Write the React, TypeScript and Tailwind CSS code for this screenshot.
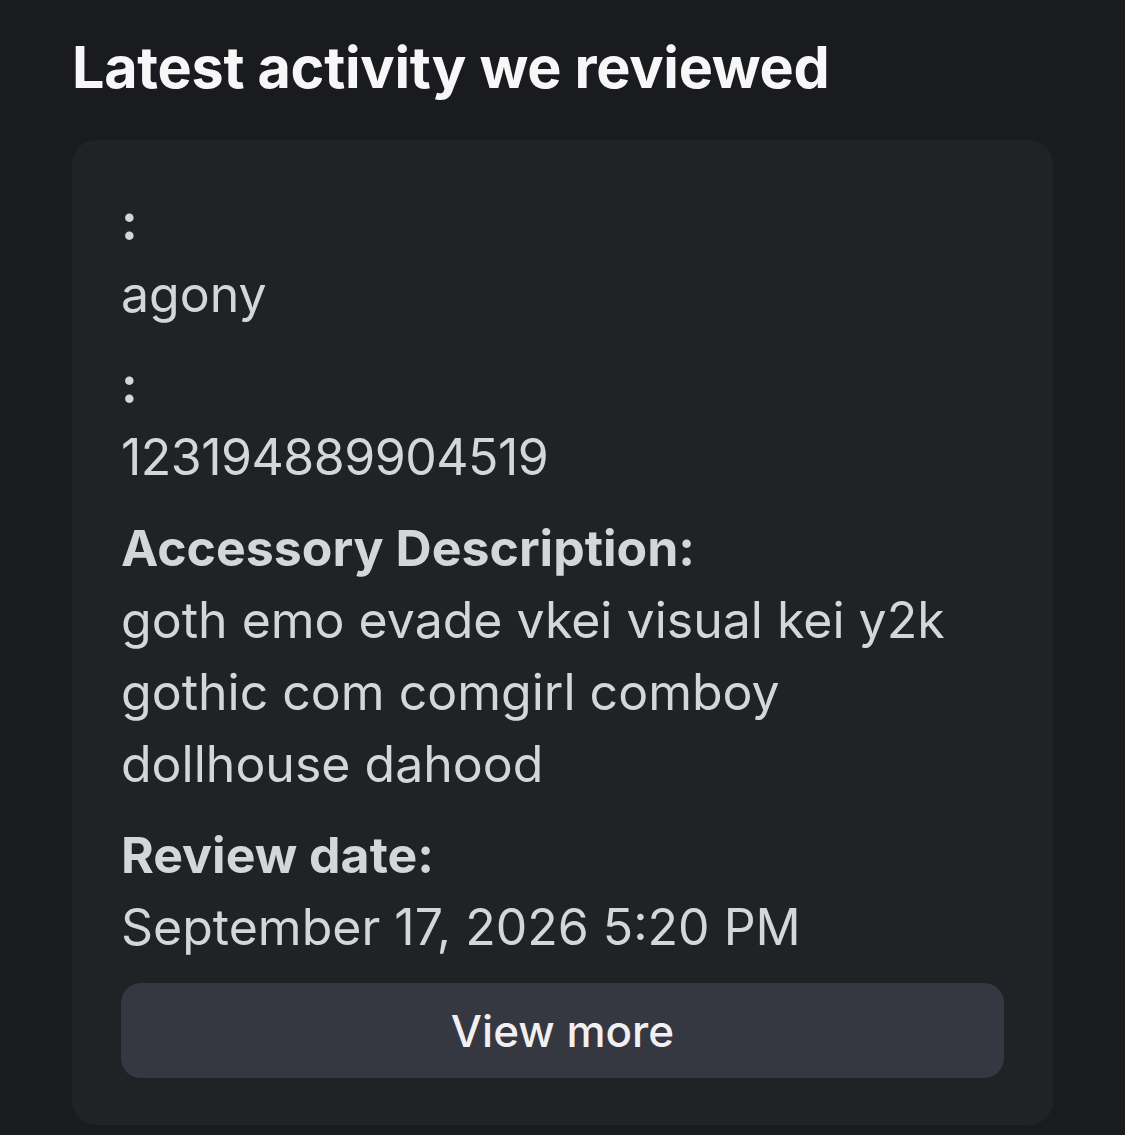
export default function App() {
  return (
    <div className="min-h-[1135px] w-[1125px] bg-[#1a1b1f] px-[72px] pt-[30px] font-['Inter',sans-serif]">
      <h2 className="text-[57.5px] font-bold leading-[74px] tracking-[-0.005em] text-[#f7f7f8]">
        Latest activity we reviewed
      </h2>
      <div className="mt-[36px] w-[981px] rounded-[24px] bg-[#212226] px-[49px] pt-[46px] pb-[47px] text-[50px] leading-[72px] text-[#d5d6da]">
        <div className="flex flex-col gap-[19px]">
          <div>
            <div className="font-bold">:</div>
            <div>agony</div>
          </div>
          <div>
            <div className="font-bold">:</div>
            <div className="tracking-[-0.01em]">123194889904519</div>
          </div>
          <div>
            <div className="font-bold">Accessory Description:</div>
            <div>goth emo evade vkei visual kei y2k gothic com comgirl comboy dollhouse dahood</div>
          </div>
          <div>
            <div className="font-bold">Review date:</div>
            <div>September 17, 2026 5:20 PM</div>
          </div>
        </div>
        <button className="mt-[20px] flex h-[95px] w-full items-center justify-center rounded-[20px] bg-[#353741] text-[44px] font-medium text-[#f0f0f2]">
          View more
        </button>
      </div>
    </div>
  );
}
